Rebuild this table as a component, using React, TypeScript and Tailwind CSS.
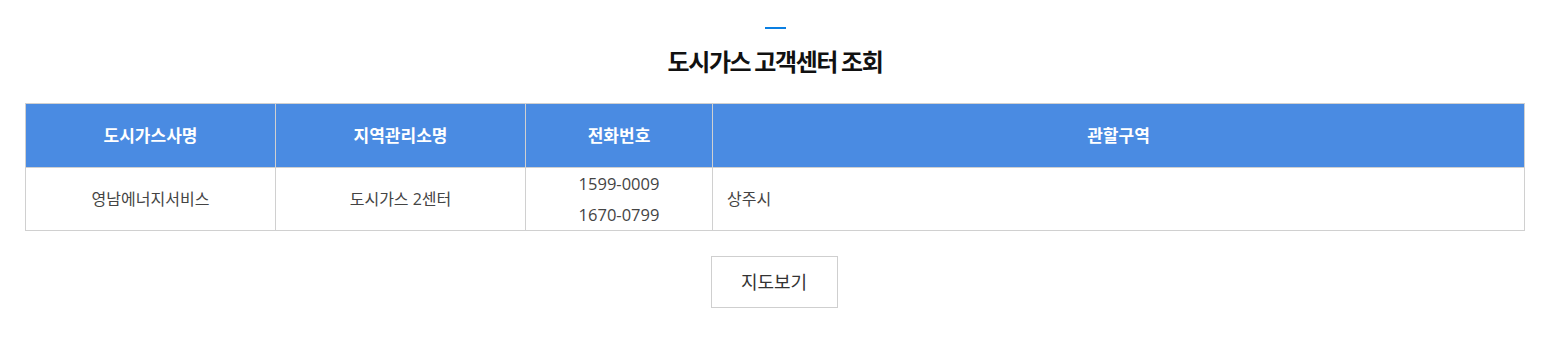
import React from "react";

const rows = [
  {
    company: "영남에너지서비스",
    office: "도시가스 2센터",
    phones: ["1599-0009", "1670-0799"],
    area: "상주시",
  },
];

const App = () => {
  return (
    <div
      className="w-[1558px] h-[337px] bg-white pt-[27px]"
      style={{ fontFamily: '"Open Sans", "Noto Sans CJK KR", sans-serif' }}
    >
      <div className="w-[1500px] ml-[25px]">
        <div className="flex flex-col items-center">
          <span className="block w-[21px] h-[2px] bg-[#0a7fe2]" />
          <h2
            className="mt-[15px] text-[24px] leading-[34px] font-bold tracking-[-1.4px] text-[#111]"
            style={{ fontFamily: '"Noto Sans CJK KR", sans-serif' }}
          >
            도시가스 고객센터 조회
          </h2>
        </div>

        <table className="mt-[25px] w-[1500px] border-collapse table-fixed">
          <colgroup>
            <col className="w-[250px]" />
            <col className="w-[250px]" />
            <col className="w-[187px]" />
            <col />
          </colgroup>
          <thead>
            <tr className="bg-[#4a8be2] text-white text-[17px] h-[64px]">
              <th className="border border-[#d0d0d0] font-bold">도시가스사명</th>
              <th className="border border-[#d0d0d0] font-bold">지역관리소명</th>
              <th className="border border-[#d0d0d0] font-bold">전화번호</th>
              <th className="border border-[#d0d0d0] font-bold">관할구역</th>
            </tr>
          </thead>
          <tbody>
            {rows.map((r) => (
              <tr key={r.company} className="text-[16px] text-[#444]">
                <td className="border border-[#d0d0d0] text-center">{r.company}</td>
                <td className="border border-[#d0d0d0] text-center">{r.office}</td>
                <td className="border border-[#d0d0d0] text-center text-[16.5px] leading-[31px]">
                  {r.phones.map((p) => (
                    <div key={p}>{p}</div>
                  ))}
                </td>
                <td className="border border-[#d0d0d0] text-left pl-[14px]">{r.area}</td>
              </tr>
            ))}
          </tbody>
        </table>

        <div className="flex justify-center mt-[25px]">
          <button className="w-[127px] h-[52px] border border-[#cfcfcf] bg-white text-[18px] text-[#333] mr-[2px]">
            지도보기
          </button>
        </div>
      </div>
    </div>
  );
};

export default App;
